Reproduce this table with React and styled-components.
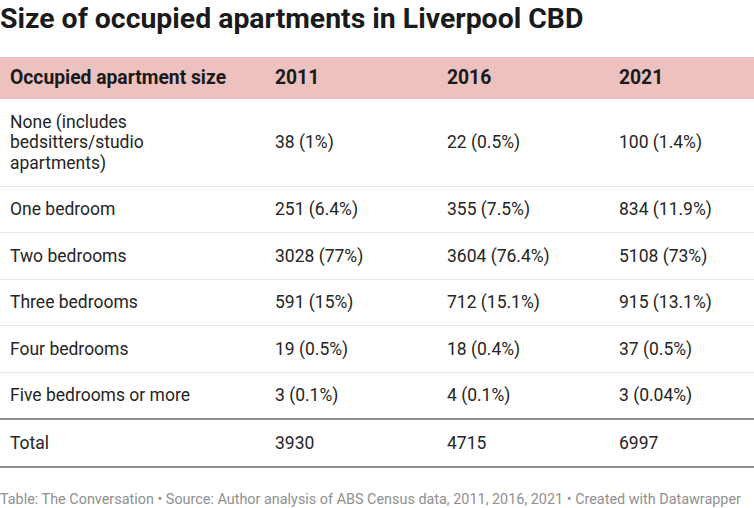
import React from "react";
import styled, { createGlobalStyle } from "styled-components";

const GlobalStyle = createGlobalStyle`
  body {
    margin: 0;
    background: #fff;
    font-family: Roboto, "Liberation Sans", sans-serif;
    color: #1d1d1d;
  }
`;

const rows = [
  ["None (includes bedsitters/studio apartments)", "38 (1%)", "22 (0.5%)", "100 (1.4%)"],
  ["One bedroom", "251 (6.4%)", "355 (7.5%)", "834 (11.9%)"],
  ["Two bedrooms", "3028 (77%)", "3604 (76.4%)", "5108 (73%)"],
  ["Three bedrooms", "591 (15%)", "712 (15.1%)", "915 (13.1%)"],
  ["Four bedrooms", "19 (0.5%)", "18 (0.4%)", "37 (0.5%)"],
  ["Five bedrooms or more", "3 (0.1%)", "4 (0.1%)", "3 (0.04%)"],
];

export default function App() {
  return (
    <Wrap>
      <GlobalStyle />
      <Title>Size of occupied apartments in Liverpool CBD</Title>
      <Table>
        <HeadRow>
          <Cell head>Occupied apartment size</Cell>
          <Cell head>2011</Cell>
          <Cell head>2016</Cell>
          <Cell head>2021</Cell>
        </HeadRow>
        {rows.map((r, i) => (
          <Row key={i} last={i === rows.length - 1}>
            {r.map((c, j) => (
              <Cell key={j} first={j === 0}>
                {c}
              </Cell>
            ))}
          </Row>
        ))}
        <Row total>
          <Cell>Total</Cell>
          <Cell>3930</Cell>
          <Cell>4715</Cell>
          <Cell>6997</Cell>
        </Row>
      </Table>
      <Footer>
        Table: The Conversation • Source: Author analysis of ABS Census data, 2011, 2016, 2021 • Created with Datawrapper
      </Footer>
    </Wrap>
  );
}

const Wrap = styled.div`
  width: 754px;
  padding-top: 1px;
`;

const Title = styled.h1`
  margin: 0 0 20px 0;
  font-size: 28.4px;
  line-height: 36px;
  font-weight: 700;
  color: #1a1a1a;
`;

const Table = styled.div`
  display: flex;
  flex-direction: column;
`;

const HeadRow = styled.div`
  display: grid;
  grid-template-columns: 265px 172px 172px 145px;
  background: #ecc1c0;
  height: 42px;
  align-items: center;
`;

const Row = styled.div`
  display: grid;
  grid-template-columns: 265px 172px 172px 145px;
  align-items: center;
  min-height: 45.5px;
  border-bottom: ${(p) =>
    p.last || p.total ? "2px solid #8f8f8f" : "1px solid #e6e6e6"};
`;

const Cell = styled.div`
  padding: ${(p) => (p.head ? "0 10px" : "12.5px 10px")};
  font-size: ${(p) => (p.head ? "19.3px" : "17.5px")};
  font-weight: ${(p) => (p.head ? 700 : 400)};
  line-height: 20.5px;
  color: ${(p) => (p.head ? "#1a1a1a" : "#252525")};
  padding-right: ${(p) => (p.first ? "60px" : "10px")};
`;

const Footer = styled.div`
  margin-top: 23px;
  font-size: 14.4px;
  line-height: 18px;
  color: #909090;
  white-space: nowrap;
`;
